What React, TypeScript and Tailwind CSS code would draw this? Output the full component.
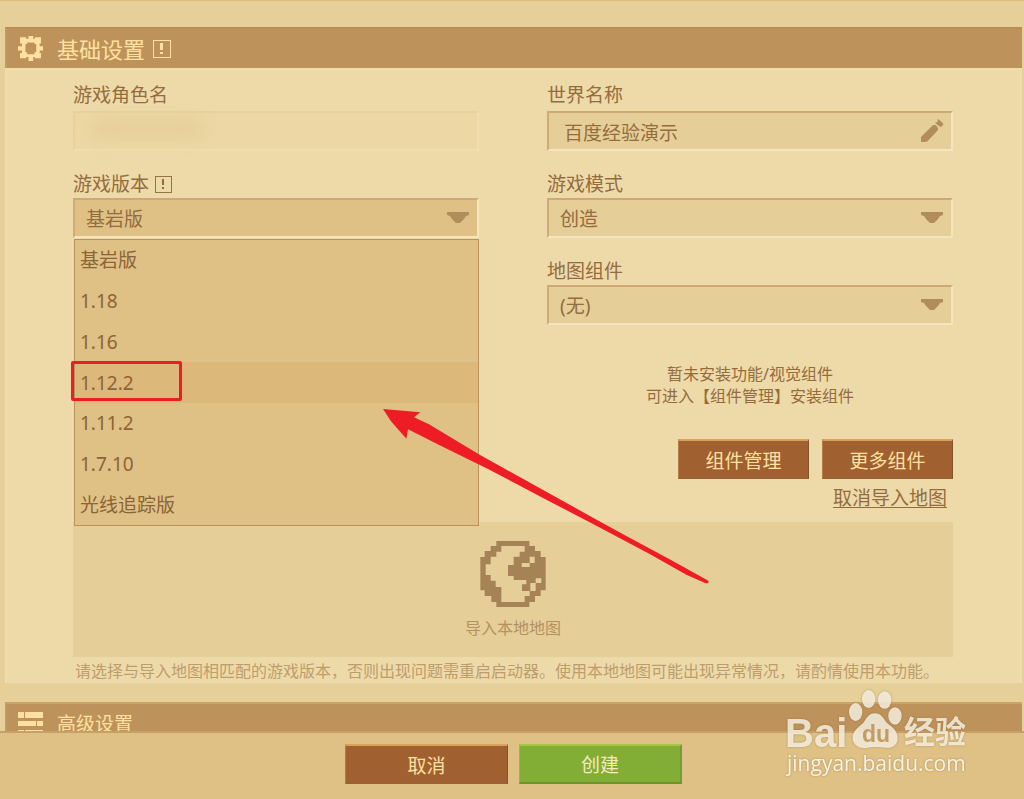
import type { ReactNode } from 'react';

const versions = ['基岩版', '1.18', '1.16', '1.12.2', '1.11.2', '1.7.10', '光线追踪版'];
const highlighted = '1.12.2';

function InfoIcon({ className }: { className: string }) {
  return (
    <svg className={className} viewBox="0 0 18 18" fill="none" shapeRendering="crispEdges" aria-hidden="true">
      <rect x="0.5" y="0.5" width="17" height="17" stroke="currentColor" />
      <path d="M7 3h3v7h-3zM7 12h3v2h-3z" fill="currentColor" />
    </svg>
  );
}

function GearIcon() {
  return (
    <svg className="size-[25px]" viewBox="0 0 74 74" fill="currentColor" aria-hidden="true">
      <path
        fillRule="evenodd"
        d="M6 4H24V8H31V0H45V8H50V4H68V22H64V30H74V43H64V50H68V66H50V62H45V74H31V62H24V66H6V50H12V43H0V30H12V22H6ZM27 19V24H22V48H27V54H49V48H54V24H49V19Z"
      />
    </svg>
  );
}

function BarsIcon() {
  return (
    <svg className="h-6 w-[25px]" viewBox="0 0 25 24" fill="currentColor" shapeRendering="crispEdges" aria-hidden="true">
      <path d="M0 0h6v6h-6zM7 0h18v6h-18zM0 9h18v5h-18zM19 9h6v5h-6zM0 18h6v6h-6zM7 18h18v6h-18z" />
    </svg>
  );
}

function CaretIcon() {
  return (
    <svg
      className="pointer-events-none absolute top-[14px] right-[10px] h-3 w-[22px] text-[#b08d59]"
      viewBox="0 0 22 12"
      fill="currentColor"
      aria-hidden="true"
    >
      <path d="M0 0H22V3L19 4L17 7L13 11H9L5 7L3 4L0 3Z" />
    </svg>
  );
}

function PencilIcon() {
  return (
    <svg
      className="pointer-events-none absolute top-[8px] right-[9px] h-6 w-[23px] text-[#b08d59]"
      viewBox="0 0 69 72"
      fill="currentColor"
      aria-hidden="true"
    >
      <path d="M0 54L36 18L44 18L51 27L51 33L18 68L0 69ZM42 12L50 8L50 0L56 4L67 14L66 18L60 24L54 21Z" />
    </svg>
  );
}

function GlobeIcon() {
  return (
    <svg className="h-[66px] w-[66px] text-[#a68356]" viewBox="12 15 196 198" fill="currentColor" aria-hidden="true">
      <path
        fillRule="evenodd"
        d="M60 15H159V30H176V45H193V63H208V163H193V180H176V198H159V213H60V198H45V180H25V163H12V63H25V45H43V30H60ZM75 30V47H60V62H43V85H28V117H43V134H58V153H75V198H145V180H160V165H178V141H162V165H137V145H150V132H112V120H95V87H112V62H130V47H145V30ZM160 62H175V81H160ZM136 81H160V93H136ZM178 127H195V141H178Z"
      />
    </svg>
  );
}

function Watermark() {
  return (
    <svg
      className="pointer-events-none absolute right-[49px] bottom-[18px] h-[95px] w-[195px] drop-shadow-[0_0_1px_rgba(120,85,40,0.5)]"
      viewBox="0 0 195 95"
      fill="#fbf5e8"
      fillOpacity="0.82"
      role="img"
      aria-label="Baidu 经验"
    >
      <text x="5" y="61" fontSize="40" fontWeight="700" fontFamily="Liberation Sans, sans-serif">Bai</text>
      <g transform="scale(0.3333)">
        <ellipse cx="266" cy="39" rx="20" ry="27" />
        <ellipse cx="314" cy="42" rx="20" ry="26" />
        <ellipse cx="227" cy="78" rx="20" ry="27" />
        <ellipse cx="345" cy="90" rx="20" ry="26" />
        <path d="M285 82C300 82 308 92 318 108C330 120 353 130 353 156C353 178 335 188 318 185C300 182 275 182 262 185C235 189 218 175 218 155C218 132 240 122 252 108C262 92 270 82 285 82Z" />
      </g>
      <text x="82" y="56" fontSize="23" fontWeight="700" fill="#c39c64" fillOpacity="1" fontFamily="Liberation Sans, sans-serif">du</text>
      <text x="124" y="57" fontSize="31" fontWeight="700" fontFamily="Noto Sans CJK SC, sans-serif">经验</text>
      <text x="7" y="85" fontSize="21" fontFamily="Open Sans, sans-serif" fillOpacity="0.95">jingyan.baidu.com</text>
    </svg>
  );
}

const fieldBox =
  'block h-10 w-full appearance-none rounded-none border-2 border-t-[#cfa975] border-l-[#cfac74] border-r-[#f5e5bd] border-b-[#f5e5bd] text-[19px] leading-6 text-[#946c3e] outline-none';

function SelectField({ id, value, className }: { id: string; value: string; className: string }) {
  return (
    <div className="relative">
      <select id={id} defaultValue={value} className={`${fieldBox} ${className} pt-0.5 pr-10 pl-[11px]`}>
        <option>{value}</option>
      </select>
      <CaretIcon />
    </div>
  );
}

function Label({ htmlFor, children }: { htmlFor: string; children: ReactNode }) {
  return (
    <label htmlFor={htmlFor} className="flex h-7 items-center gap-1.5 text-[19px] leading-7">
      {children}
    </label>
  );
}

function VersionMenu() {
  return (
    <div className="absolute top-[41px] right-0 left-px z-10">
      <ul
        role="listbox"
        aria-label="游戏版本"
        className="flex h-[287px] w-full flex-col border border-[#ba915a] bg-[#dfc185] text-[19px] leading-6 text-[#8d6436]"
      >
        {versions.map((version) => (
          <li
            key={version}
            role="option"
            aria-selected={version === highlighted}
            className={`relative flex flex-1 items-center pl-[5px] ${version === highlighted ? 'bg-[#dcb87a]' : ''}`}
          >
            {version}
            {version === highlighted && (
              <span className="absolute -top-px -left-1 h-10 w-[111px] rounded-xs border-3 border-[#ee1c25]" />
            )}
          </li>
        ))}
      </ul>
      <svg
        className="pointer-events-none absolute top-[170px] left-[309px] h-[176px] w-[328px]"
        viewBox="70 57 984 528"
        fill="#ee1c25"
        aria-hidden="true"
      >
        <path d="M70 57L182 67L163 82L208 103L360 194L438 238L700 383L800 438L930 508L1046 572L1046 580L1038 580L980 554L870 492L700 402L560 329L385 237L240 166L145 118L140 146L94 94Z" />
      </svg>
    </div>
  );
}

const brownButton =
  'h-10 border border-t-2 border-t-[#dba05a] border-l-[#b67c45] border-r-[#835429] border-b-[#966238] bg-[#a06030] pt-0.5 text-[19px] leading-6 text-[#ffe0a0]';

export default function App() {
  return (
    <div className="relative flex h-screen flex-col overflow-hidden border-t border-[#dfbb7c] bg-[#e6cf98] font-['Noto_Sans','Noto_Sans_CJK_SC',sans-serif] text-[#946c3e]">
      <main className="min-h-0 flex-1 overflow-hidden pt-[26px] pr-0.5 pl-[5px]">
        <section>
          <h2 className="flex h-[41px] items-center border-t-2 border-l-2 border-[#c29a60] border-t-[#b88e55] bg-[#be935b] pl-[11px] text-[22px] leading-8 font-normal text-[#ffe0a0]">
            <GearIcon />
            <span className="mr-2 ml-3.5">基础设置</span>
            <InfoIcon className="size-[18px]" />
          </h2>
          <div className="border-2 border-b-0 border-[#efddae] bg-[#eedaa9] pt-[11px] pr-[67px] pl-[66px]">
            <div className="grid grid-cols-2 gap-x-[68px]">
              <div>
                <Label htmlFor="role">游戏角色名</Label>
                <div className="relative mt-0.5">
                  <input
                    id="role"
                    readOnly
                    className="block h-10 w-full border-2 border-[#e9d09c] border-r-[#f0deb1] border-b-[#f0deb1] bg-[#edd8a5] px-4 outline-none"
                  />
                  <span className="absolute top-1.5 left-4 h-6 w-[116px] rounded-full bg-[#e6cf9b] blur-sm" />
                </div>
                <div className="mt-[19px]">
                  <Label htmlFor="version">
                    游戏版本
                    <InfoIcon className="size-[17px]" />
                  </Label>
                  <div className="relative">
                    <SelectField id="version" value="基岩版" className="bg-[#dfc185]" />
                    <VersionMenu />
                  </div>
                </div>
              </div>
              <div>
                <Label htmlFor="world">世界名称</Label>
                <div className="relative mt-0.5">
                  <input id="world" defaultValue="百度经验演示" className={`${fieldBox} bg-[#e5ce97] pt-0.5 pr-10 pl-[15px]`} />
                  <PencilIcon />
                </div>
                <div className="mt-[19px]">
                  <Label htmlFor="mode">游戏模式</Label>
                  <SelectField id="mode" value="创造" className="bg-[#e5ce97]" />
                </div>
                <div className="mt-[19px]">
                  <Label htmlFor="component">地图组件</Label>
                  <SelectField id="component" value="(无)" className="bg-[#e5ce97]" />
                </div>
                <p className="mt-[38px] text-center text-base leading-[22px]">
                  暂未安装功能/视觉组件
                  <br />
                  可进入【组件管理】安装组件
                </p>
                <div className="mt-8 flex justify-end gap-[13px]">
                  <button type="button" className={`${brownButton} w-[131px]`}>组件管理</button>
                  <button type="button" className={`${brownButton} w-[131px]`}>更多组件</button>
                </div>
                <div className="mt-[7px] flex justify-end pr-1.5">
                  <a href="#import" className="text-[19px] leading-6 underline decoration-1 underline-offset-2">取消导入地图</a>
                </div>
              </div>
            </div>
            <button
              type="button"
              className="mt-3 flex h-[135px] w-full flex-col items-center bg-[#e5ce97] pt-[19px] text-base leading-6 text-[#b39261]"
            >
              <GlobeIcon />
              <span className="mt-[9px]">导入本地地图</span>
            </button>
            <p className="h-[26px] pt-0.5 pl-0.5 text-base leading-6 whitespace-nowrap text-[#bd9d6c]">
              请选择与导入地图相匹配的游戏版本，否则出现问题需重启启动器。使用本地地图可能出现异常情况，请酌情使用本功能。
            </p>
          </div>
        </section>
        <section className="mt-[19px]">
          <h2 className="flex h-[41px] items-center border-t-2 border-l-2 border-[#c29a60] border-t-[#c9a469] bg-[#be935b] pl-[11px] text-[19px] leading-7 font-normal text-[#ffe0a0]">
            <BarsIcon />
            <span className="ml-3.5">高级设置</span>
          </h2>
        </section>
      </main>
      <footer className="flex h-[68px] shrink-0 justify-center gap-[11px] border-t-2 border-[#c6a066] bg-[#dfc185] pt-[11px] pl-[3px]">
        <button type="button" className={`${brownButton} w-[163px]`}>取消</button>
        <button
          type="button"
          className="h-10 w-[163px] border border-t-2 border-r-2 border-b-2 border-t-[#a4c846] border-r-[#76993b] border-b-[#70922c] border-l-[#91b944] bg-[#82ae35] pt-0.5 text-[19px] leading-6 text-[#f8e8bd]"
        >
          创建
        </button>
      </footer>
      <Watermark />
    </div>
  );
}
